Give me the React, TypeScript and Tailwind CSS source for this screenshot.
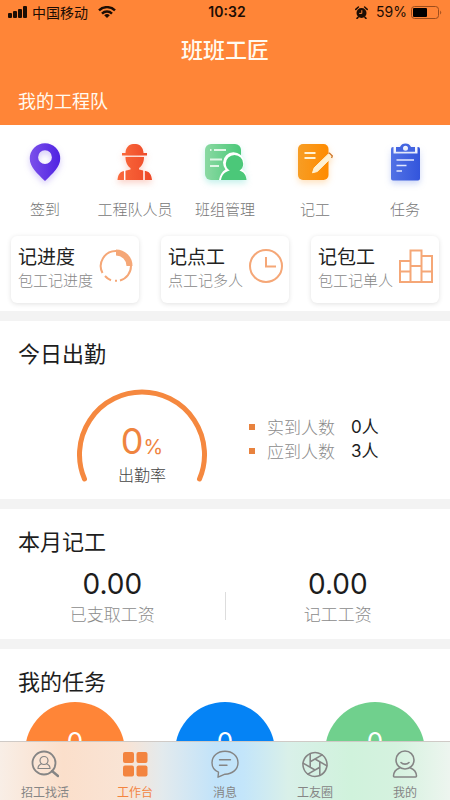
import type { ReactNode } from 'react';

function StatusBar() {
  return (
    <div className="grid h-6 grid-cols-3 items-center px-2 text-sm leading-5 text-[#1c0d04]">
      <div className="flex items-center gap-1">
        <svg className="h-3 w-5" viewBox="0 0 20 12" fill="currentColor" aria-hidden="true">
          <rect x="0" y="7" width="4" height="5" rx="1" />
          <rect x="5" y="5" width="4" height="7" rx="1" />
          <rect x="10" y="3" width="4" height="9" rx="1" />
          <rect x="15" y="0" width="4" height="12" rx="1" />
        </svg>
        <span>中国移动</span>
        <svg className="ml-1.5 h-3 w-[18px]" viewBox="0 0 18 12" fill="none" stroke="currentColor" strokeWidth="2.4" aria-hidden="true">
          <path d="M1 4.4a11.4 11.4 0 0 1 16 0M4 7.6a7 7 0 0 1 10 0" />
          <path d="M9 12 6.2 9.3a4 4 0 0 1 5.600 0Z" fill="currentColor" stroke="none" />
        </svg>
      </div>
      <time className="pl-1 text-center font-[Inter] font-semibold">10:32</time>
      <div className="flex items-center justify-end gap-1 font-[Inter]">
        <svg className="mr-1 h-[13px] w-[13px]" viewBox="0 0 13 13" aria-hidden="true">
          <circle cx="6.5" cy="7" r="5" fill="currentColor" />
          <path d="M.8 3.4 3.4 1M12.2 3.4 9.6 1M3 11.4l-1 1M10 11.4l1 1" stroke="currentColor" strokeWidth="1.5" strokeLinecap="round" />
          <path d="M6.8 4.2v3.2H4.2" fill="none" stroke="#ff8537" />
        </svg>
        <span>59%</span>
        <svg className="h-[13px] w-[31px]" viewBox="0 0 31 13" aria-hidden="true">
          <rect x=".5" y=".5" width="27" height="12" rx="3" fill="none" stroke="#9c4d1c" />
          <rect x="2" y="2" width="14" height="9" rx="1" fill="#000" />
          <path d="M29.2 4.5v4a2.5 2.5 0 0 0 0-4Z" fill="#9c4d1c" />
        </svg>
      </div>
    </div>
  );
}

function PinIcon() {
  return (
    <>
      <defs>
        <linearGradient id="pin" x1="0" x2="1"><stop stopColor="#7b50ea" /><stop offset="1" stopColor="#4f22e2" /></linearGradient>
      </defs>
      <path fillRule="evenodd" fill="url(#pin)" d="M22 3.3a15.2 15.2 0 0 0-15.2 15.4C6.8 27 14 33 22 41 30 33 37.2 27 37.2 18.7A15.2 15.2 0 0 0 22 3.3Zm0 7a6.9 6.9 0 1 1 0 13.8 6.9 6.9 0 0 1 0-13.8Z" />
    </>
  );
}

function WorkerIcon() {
  return (
    <>
      <defs>
        <linearGradient id="worker" x1="0" x2="1"><stop stopColor="#fa6a3c" /><stop offset="1" stopColor="#ee4928" /></linearGradient>
      </defs>
      <g fill="url(#worker)">
        <path d="M12.500 13C12.500 8 16 4 20 4h3c4 0 7.500 4 7.500 9h3.500v2.500H9V13Z" />
        <path d="M12.500 17h18.500c0 5.500-2 9-5 11v1.500l7.500 1.700c3.500 1 5 3.800 5.500 8.800H4.500c.5-5 2-7.800 5.500-8.800l7.500-1.700V28c-3-2-5-5.500-5-11Z" />
      </g>
      <path d="M11.700 30v10M31 30v10" stroke="#fff" strokeWidth="1.5" />
    </>
  );
}

function TeamIcon() {
  return (
    <>
      <defs>
        <linearGradient id="team" x1="0" x2="1"><stop stopColor="#8ad9a2" /><stop offset="1" stopColor="#49c878" /></linearGradient>
      </defs>
      <rect x="2" y="4" width="36" height="36" rx="6" fill="url(#team)" />
      <path d="M7 10h1.500M11 10h12M7 19.500h12M7 26h9" stroke="#dff6e6" strokeWidth="2" />
      <path d="M22.500 29.500a10.500 10.500 0 1 1 16.500-.5l4 4V40H16c1-5 3-8.500 6.500-10.500Z" fill="#fff" />
      <path d="M31.500 15a8.700 8.700 0 0 0-8.700 8.700c0 3 1.500 5.300 4 6.900-4.500 1-7.800 4-8.800 9.400h25.500c-.5-5.200-2.500-7.700-7-9.400 2.500-1.600 3.700-3.900 3.700-6.900a8.700 8.700 0 0 0-8.700-8.700Z" fill="#4bc879" />
    </>
  );
}

function RecordIcon() {
  return (
    <>
      <defs>
        <linearGradient id="record" x1="0" x2="1"><stop stopColor="#f79d24" /><stop offset="1" stopColor="#ff8b00" /></linearGradient>
      </defs>
      <rect x="5" y="4" width="30.5" height="36" rx="5" fill="url(#record)" />
      <path d="M11.500 13h11M11.500 18h11" stroke="#fff1d2" strokeWidth="2" />
      <path d="m19.500 32.800 1.700-5L36 13.400l3.300 3.300-15 14.800Z" fill="#fff1d2" stroke="#fff1d2" strokeLinejoin="round" />
      <path d="m35.500 13.300 1-.2 2.800 2.900-.7 2" fill="none" stroke="#ce762a" strokeWidth="1.300" />
    </>
  );
}

function TaskIcon() {
  return (
    <>
      <defs>
        <linearGradient id="task" x1="0" x2="1"><stop stopColor="#5272e5" /><stop offset="1" stopColor="#3355dc" /></linearGradient>
      </defs>
      <path d="M10.500 7H10a2 2 0 0 0-2 2v29.500a2 2 0 0 0 2 2h25a2 2 0 0 0 2-2V9a2 2 0 0 0-2-2h-.5v6.500h-24Z" fill="url(#task)" />
      <path fillRule="evenodd" d="M13 7h4c1-2.500 3-3.500 5.500-3.500S27 4.500 28 7h4v4.800H13Zm9.500-1.200a2.500 2.500 0 1 0 0 5 2.500 2.500 0 0 0 0-5Z" fill="#4264e1" />
      <path d="M13.500 20H31M13.500 25.500h10M13.500 31h5.500" stroke="#e1e8ff" strokeWidth="1.7" />
    </>
  );
}

function ShortcutButton({ label, glow, children }: { label: string; glow: string; children: ReactNode }) {
  return (
    <button type="button" className="flex flex-col items-center gap-[13px] text-[15px] leading-6 font-light whitespace-nowrap text-[#777]">
      <svg className={`h-11 w-11 ${glow}`} viewBox="0 0 44 44" aria-hidden="true">{children}</svg>
      {label}
    </button>
  );
}

function ModeCard({ title, note, children }: { title: string; note: string; children: ReactNode }) {
  return (
    <button type="button" className="flex h-[67px] items-start justify-between rounded-md bg-white pt-2 pr-[5px] pl-[7px] text-left shadow-[0_1px_5px_rgba(0,0,0,0.12)]">
      <span className="flex flex-col whitespace-nowrap">
        <span className="text-[19px] leading-6 text-[#222]">{title}</span>
        <span className="text-[15px] leading-6 font-light text-[#888]">{note}</span>
      </span>
      <svg className="mt-1 -ml-2 h-9 w-9 shrink-0" viewBox="0 0 36 36" fill="none" stroke="#f5a777" strokeWidth="2" aria-hidden="true">{children}</svg>
    </button>
  );
}

function Section({ title, children }: { title: string; children: ReactNode }) {
  return (
    <section className="bg-white pt-[15px]">
      <h2 className="px-[18px] text-[22px] leading-8 text-[#1d1d1d]">{title}</h2>
      {children}
    </section>
  );
}

function CountRow({ label, value }: { label: string; value: string }) {
  return (
    <div className="flex items-center text-[17px] leading-6">
      <span className="mr-3 size-1.5 bg-[#e8823e]" />
      <dt className="font-light text-[#8c8c8c]">{label}</dt>
      <dd className="ml-4 font-['Inter','Noto_Sans_CJK_SC',sans-serif] text-[#1d1d1d]">{value}</dd>
    </div>
  );
}

function Amount({ label }: { label: string }) {
  return (
    <div className="flex flex-1 flex-col items-center">
      <span className="font-[Inter] text-[28px] leading-8 text-[#1d1d1d]">0.00</span>
      <span className="text-[17px] leading-7 font-light text-[#8c8c8c]">{label}</span>
    </div>
  );
}

function TaskCircle({ color }: { color: string }) {
  return (
    <div className={`flex size-[100px] justify-center rounded-full pt-6 font-[Inter] text-[26px] leading-8 text-white ${color}`}>0</div>
  );
}

function Tab({ label, active = false, children }: { label: string; active?: boolean; children: ReactNode }) {
  return (
    <button
      type="button"
      aria-current={active ? 'page' : undefined}
      className={`flex flex-col items-center gap-1 pt-2 text-xs leading-5 ${active ? 'text-[#f3843f]' : 'text-[#858585]'}`}
    >
      <svg className="h-7 w-7" viewBox="0 0 28 28" fill="none" stroke="currentColor" strokeWidth="1.6" strokeLinecap="round" strokeLinejoin="round" aria-hidden="true">
        {children}
      </svg>
      {label}
    </button>
  );
}

export default function App() {
  return (
    <div className="flex h-screen flex-col bg-white font-['Noto_Sans_CJK_SC',sans-serif]">
      <main className="min-h-0 flex-1 overflow-y-auto bg-[#f3f3f3] [scrollbar-width:none]">
        <header className="bg-[#ff8537] pb-[9px] text-[#fffaf0]">
          <StatusBar />
          <h1 className="pt-2 text-center text-[22px] leading-8 font-medium">班班工匠</h1>
          <p className="px-[18px] pt-5 text-lg leading-8">我的工程队</p>
        </header>

        <div className="bg-white pt-[15px] pb-2">
          <div className="grid grid-cols-5">
            <ShortcutButton label="签到" glow="drop-shadow-[0_3px_3px_rgba(90,50,230,0.25)]"><PinIcon /></ShortcutButton>
            <ShortcutButton label="工程队人员" glow="drop-shadow-[0_3px_3px_rgba(240,80,40,0.25)]"><WorkerIcon /></ShortcutButton>
            <ShortcutButton label="班组管理" glow="drop-shadow-[0_3px_3px_rgba(60,210,190,0.3)]"><TeamIcon /></ShortcutButton>
            <ShortcutButton label="记工" glow="drop-shadow-[0_3px_3px_rgba(255,140,0,0.25)]"><RecordIcon /></ShortcutButton>
            <ShortcutButton label="任务" glow="drop-shadow-[0_3px_3px_rgba(50,90,220,0.25)]"><TaskIcon /></ShortcutButton>
          </div>
          <div className="grid grid-cols-3 gap-[22px] px-[11px] pt-[15px]">
            <ModeCard title="记进度" note="包工记进度">
              <path d="M18 3A15 15 0 0 0 4.500 25M7 28a15 15 0 0 0 6 4.200M22 32.500a15 15 0 0 0 11-14.500" />
              <path d="M17 32.800h2" />
              <path d="M18 4.500A13.500 13.500 0 0 1 31.500 18" strokeWidth="6" />
            </ModeCard>
            <ModeCard title="记点工" note="点工记多人">
              <circle cx="18" cy="18" r="16" />
              <path d="M18 9v9.500h10" />
            </ModeCard>
            <ModeCard title="记包工" note="包工记单人">
              <path d="M2 13h10.500V2.500h11V8H34v26H2ZM12.500 13v21M23.500 8v26M2 23.500h10.500M12.500 18h11M23.500 23.500H34" />
            </ModeCard>
          </div>
        </div>

        <div className="mt-2.5 space-y-2.5">
          <Section title="今日出勤">
            <div className="flex items-start pt-[21px] pb-2 pl-[77px]">
              <div className="relative h-[102px] w-[130px]">
                <svg className="size-full" viewBox="0 0 130 102" fill="none" stroke="#f5883f" strokeWidth="5" strokeLinecap="round" aria-hidden="true">
                  <path d="M7.500 90A62.500 62.500 0 1 1 122.500 90" />
                </svg>
                <div className="absolute inset-x-0 top-9 text-center">
                  <div className="font-[Inter] leading-8 text-[#ef8440]">
                    <span className="text-4xl leading-8">0</span>
                    <span className="text-xl leading-8">%</span>
                  </div>
                  <div className="text-base leading-5 font-light text-[#444]">出勤率</div>
                </div>
              </div>
              <dl className="mt-[26px] ml-[42px]">
                <CountRow label="实到人数" value="0人" />
                <CountRow label="应到人数" value="3人" />
              </dl>
            </div>
          </Section>

          <Section title="本月记工">
            <div className="flex pt-3 pb-[11px]">
              <Amount label="已支取工资" />
              <span className="mt-6 h-7 w-px bg-[#ddd]" />
              <Amount label="记工工资" />
            </div>
          </Section>

          <Section title="我的任务">
            <div className="grid grid-cols-3 justify-items-center pt-[6px] pb-6">
              <TaskCircle color="bg-[#ff8537]" />
              <TaskCircle color="bg-[#0583f5]" />
              <TaskCircle color="bg-[#70d08d]" />
            </div>
          </Section>
        </div>
      </main>

      <nav className="grid h-[59px] shrink-0 grid-cols-5 border-t border-[#cfcac6] bg-[linear-gradient(90deg,#f8eee6_0%,#fbdfcb_14%,#f9e4d5_28%,#e3eaed_36%,#c1e3fa_48%,#c3e5fa_54%,#d9f0e9_64%,#d0f2dc_78%,#d5f2df_88%,#edf5ef_100%)]">
        <Tab label="招工找活">
          <circle cx="13" cy="13" r="11.5" strokeWidth="1.8" />
          <path d="m21 21 6 5" strokeWidth="2.4" />
          <circle cx="13" cy="10.5" r="4" strokeWidth="1.2" />
          <path d="M10.500 13.800c-2.500 1-3.500 2.400-3.500 4.700h12c0-2.300-1-3.700-3.500-4.700" strokeWidth="1.2" />
        </Tab>
        <Tab label="工作台" active>
          <g fill="currentColor" stroke="none">
            <rect x="2" y="2" width="11" height="11" rx="2" />
            <rect x="15.5" y="2" width="11" height="11" rx="2" />
            <rect x="2" y="15.5" width="11" height="11" rx="2" />
            <rect x="15.5" y="15.5" width="11" height="11" rx="2" />
          </g>
        </Tab>
        <Tab label="消息">
          <path d="M14 1.200c7.500 0 13 5 13 11.500s-5.500 11.500-13 11.500l-7 3 .5-5C3.500 20.500 1 17 1 12.700 1 6.200 6.500 1.200 14 1.200Z" strokeWidth="1.400" />
          <path d="M8.500 9.800h11M8.500 15.200h7.500" strokeWidth="1.400" />
        </Tab>
        <Tab label="工友圈">
          <g transform="translate(14 14.500) rotate(30) scale(1.200) translate(-12 -12)" strokeWidth="1.300">
            <circle cx="12" cy="12" r="10" />
            <path d="m14.310 8 5.740 9.940M9.690 8h11.480M7.380 12l5.740-9.940M9.690 16 3.950 6.060M14.310 16H2.830M16.620 12l-5.740 9.940" />
          </g>
        </Tab>
        <Tab label="我的">
          <circle cx="14" cy="10" r="9" />
          <path d="M10 12.500c2 2.200 6 2.200 8 0M8.500 18C4.500 19.500 2.700 22 2.500 26c0 .8.300 1 1 1h21c.7 0 1-.200 1-1-.2-4-2-6.500-6-8" />
        </Tab>
      </nav>
    </div>
  );
}
